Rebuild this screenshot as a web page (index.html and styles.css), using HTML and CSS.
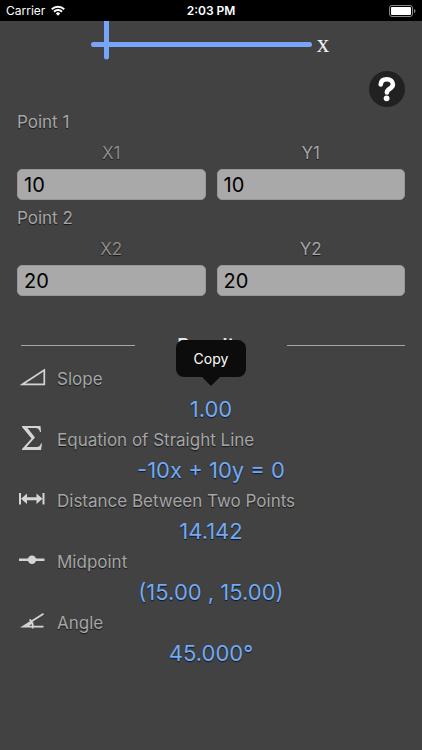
FILE: index.html
```html
<!DOCTYPE html>
<html lang="en">
<head>
<meta charset="utf-8">
<meta name="viewport" content="width=device-width, initial-scale=1">
<title>Slope calculator</title>
<link rel="stylesheet" href="styles.css">
</head>
<body>
<header class="status">
  <div class="carrier">
    <span>Carrier</span>
    <svg width="14" height="11" viewBox="0 0 14 11" fill="none" stroke="#fff" stroke-width="2"><path d="M.8 4.3a8.8 8.8 0 0 1 12.4 0M3 6.7a5.6 5.6 0 0 1 8 0"/><path d="M4.8 8.4a3.1 3.1 0 0 1 4.4 0L7 10.7z" fill="#fff" stroke="none"/></svg>
  </div>
  <span class="time">2:03 PM</span>
  <svg class="battery" width="27" height="12" viewBox="0 0 27 12"><rect x=".5" y=".5" width="23" height="11" rx="2.5" fill="none" stroke="#8a8a8a"/><rect x="2" y="2" width="20" height="8" rx="1" fill="#fff"/><path d="M25 4q1.5.5 1.5 2T25 8z" fill="#8a8a8a"/></svg>
</header>
<main>
  <div class="graph">
    <svg width="226" height="40" viewBox="0 0 226 40" stroke="#78a4fa" stroke-width="5" stroke-linecap="round"><path d="M2.500 23.500H218.500M15.500 -4V36"/></svg>
    <span class="axis-name">x</span>
  </div>
  <div class="tools">
    <button class="help" type="button" aria-label="Help">
      <svg width="36" height="36" viewBox="0 0 36 36"><circle cx="18" cy="18" r="18" fill="#212121"/><path d="M11.700 13.500C12 9.800 14.400 8.200 17.700 8.200c3.800 0 6.200 2.100 6.200 5.200 0 4.400-6 4.200-6 8" fill="none" stroke="#fff" stroke-width="4.600" stroke-linecap="round"/><circle cx="17.600" cy="27.300" r="2.900" fill="#fff"/></svg>
    </button>
  </div>
  <form>
    <fieldset>
      <legend>Point 1</legend>
      <div class="pair">
        <div class="field"><label class="dim" for="x1">X1</label><input id="x1" inputmode="decimal" value="10"></div>
        <div class="field"><label for="y1">Y1</label><input id="y1" inputmode="decimal" value="10"></div>
      </div>
    </fieldset>
    <fieldset>
      <legend>Point 2</legend>
      <div class="pair">
        <div class="field"><label class="dim" for="x2">X2</label><input id="x2" inputmode="decimal" value="20"></div>
        <div class="field"><label for="y2">Y2</label><input id="y2" inputmode="decimal" value="20"></div>
      </div>
    </fieldset>
  </form>
  <section>
    <div class="divider"><hr><h2>Results</h2><hr></div>
    <dl>
      <dt><svg width="32" height="28" viewBox="0 0 32 28" fill="none" stroke="#d4d4d4" stroke-width="1.700"><path d="M5.500 19.300L27.300 5V19.300z"/></svg>Slope</dt>
      <dd class="selected"><button class="copy" type="button">Copy</button>1.00</dd>
      <dt><svg width="32" height="28" viewBox="0 0 32 28"><path d="M5 0H23.500L24 6H23Q22.200 2 18.500 2H10.500L18 11.500L9.500 21H19.500Q23 21 24 17.500H25L24 24H5V23L14.500 12.500L5 1z" fill="#d4d4d4"/></svg>Equation of Straight Line</dt>
      <dd>-10x + 10y = 0</dd>
      <dt><svg width="32" height="28" viewBox="0 0 32 28"><path d="M2 6H4V17.500H2zM25.500 6H27.500V17.500H25.500zM4 11.700L10 6.500V10.200H19.500V6.500L25.500 11.700L19.500 17V13.200H10V17z" fill="#d4d4d4"/></svg>Distance Between Two Points</dt>
      <dd>14.142</dd>
      <dt><svg width="32" height="28" viewBox="0 0 32 28"><path d="M2 10.500H27.500V13H2z" fill="#d4d4d4"/><circle cx="15" cy="11.700" r="4.200" fill="#d4d4d4"/></svg>Midpoint</dt>
      <dd>(15.00 , 15.00)</dd>
      <dt><svg width="32" height="28" viewBox="0 0 32 28" fill="none" stroke="#d4d4d4" stroke-width="1.700"><path d="M26.500 4.700L6 17.700H26.500M12.500 10.500Q17 13.500 15.500 19.500M10 17L15.500 13.500"/></svg>Angle</dt>
      <dd>45.000°</dd>
    </dl>
  </section>
</main>
</body>
</html>
```
FILE: styles.css
```css
* {
  box-sizing: border-box;
}

body {
  margin: 0;
  min-height: 100vh;
  background: #424242;
  color: #a6a6a6;
  font-family: Inter, "Liberation Sans", sans-serif;
  font-size: 17px;
  font-weight: 400;
}

.status {
  display: grid;
  grid-template-columns: 1fr auto 1fr;
  align-items: center;
  height: 21px;
  padding: 0 6px;
  background: #000;
  color: #fff;
  font-size: 12px;
}

.carrier {
  display: flex;
  align-items: center;
  gap: 6px;
}

.time {
  font-weight: 600;
}

.battery {
  justify-self: end;
}

main {
  padding: 0 17px;
}

.graph {
  display: flex;
  justify-content: center;
  height: 50px;
}

.axis-name {
  padding-right: 2px;
  color: #f0f0f0;
  font: 25px/46px "Liberation Serif", serif;
}

.tools {
  display: flex;
  justify-content: flex-end;
  height: 35px;
}

.help {
  width: 36px;
  height: 36px;
  padding: 0;
  border: 0;
  background: none;
}

fieldset {
  margin: 0 0 2px;
  padding: 0;
  border: 0;
  min-width: 0;
}

legend,
label,
dt {
  text-shadow: 0 1px 1px #151515;
}

legend {
  padding: 0;
  line-height: 32px;
}

.pair {
  display: grid;
  grid-template-columns: 1fr 1fr;
  gap: 11px;
}

label {
  display: block;
  text-align: center;
  line-height: 31px;
}

.dim {
  color: #8c8c8c;
}

input {
  display: block;
  width: 100%;
  height: 31px;
  padding: 0 6px;
  border: 1px solid #989898;
  border-radius: 5px;
  background: #a9a9a9;
  color: #000;
  font: 400 20px Inter, sans-serif;
}

.divider {
  display: grid;
  grid-template-columns: 114fr 152fr 118fr;
  align-items: center;
  margin-top: 32px;
  padding-left: 4px;
  height: 35px;
}

hr {
  width: 100%;
  margin: 0;
  border: 0;
  border-top: 1px solid #a6a6a6;
}

h2 {
  margin: 0;
  color: #e6e6e6;
  font-size: 19px;
  font-weight: 600;
  text-align: center;
}

dl {
  margin: 0;
}

dt {
  display: flex;
  align-items: center;
  gap: 8px;
  height: 31px;
}

dd {
  position: relative;
  margin: 0;
  color: #74aaf0;
  font-size: 22px;
  line-height: 30px;
  text-align: center;
  text-shadow: 0 1px 1px #0b1830;
}

.copy {
  position: absolute;
  bottom: 47px;
  left: 50%;
  width: 70px;
  height: 37px;
  padding: 0;
  transform: translateX(-50%);
  border: 0;
  border-radius: 8px;
  background: #0c0c0c;
  color: #fff;
  font: 400 14px Inter, sans-serif;
}

.copy::after {
  content: "";
  position: absolute;
  top: 100%;
  left: 50%;
  transform: translateX(-50%);
  border: solid transparent;
  border-width: 9px 9px 0;
  border-top-color: #0c0c0c;
}
```
